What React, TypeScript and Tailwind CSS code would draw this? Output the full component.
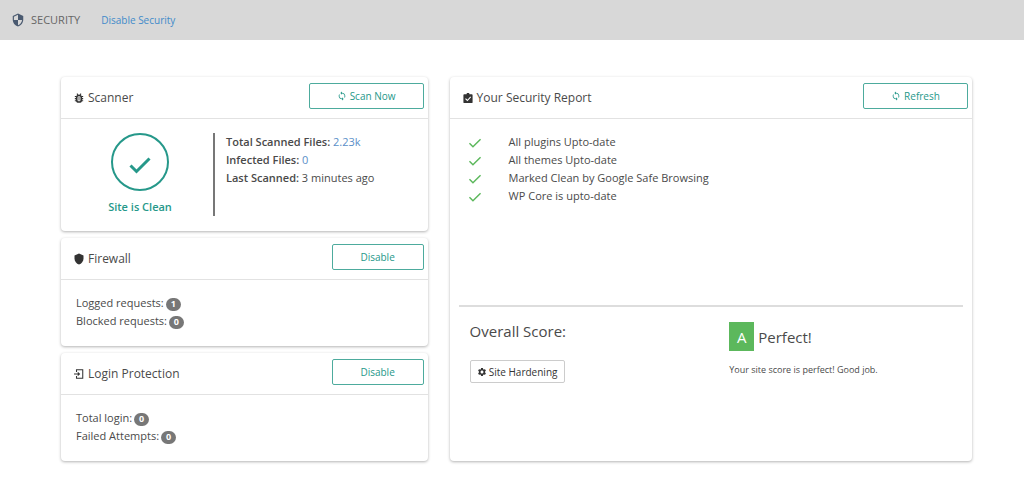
import React from 'react';
import { MdSecurity, MdSettings, MdShield, MdSync } from 'react-icons/md';

const reportItems = [
  'All plugins Upto-date',
  'All themes Upto-date',
  'Marked Clean by Google Safe Browsing',
  'WP Core is upto-date',
];

function CheckIcon({ className, strokeWidth }: { className: string; strokeWidth: number }) {
  return (
    <svg viewBox="0 0 24 24" className={className} fill="none" stroke="currentColor" strokeWidth={strokeWidth} aria-hidden="true">
      <path d="M2.500 12.500l6 6L21.500 5.500" />
    </svg>
  );
}

function BugIcon() {
  return (
    <svg viewBox="0 0 24 24" className="h-2.5 w-2.5" fill="none" stroke="currentColor" aria-hidden="true">
      <rect x="6.500" y="6" width="11" height="15.500" rx="5" strokeWidth="4" />
      <path d="M2 8.500h4M2 13.500h4M2 18.500h4M18 8.500h4M18 13.500h4M18 18.500h4M7 1.500l3 3.500M17 1.500l-3 3.500" strokeWidth="2.500" />
      <path d="M12 9v9" strokeWidth="2" />
    </svg>
  );
}

function ReportIcon() {
  return (
    <svg viewBox="0 0 24 24" className="h-2.5 w-2.5" aria-hidden="true">
      <path d="M3 3h5.500a3.500 3.500 0 0 1 7 0H21a2 2 0 0 1 2 2v17a2 2 0 0 1-2 2H3a2 2 0 0 1-2-2V5a2 2 0 0 1 2-2z" fill="currentColor" />
      <path d="M6 13.500l4.500 4.500L18.500 9.500" fill="none" stroke="#fff" strokeWidth="2.600" />
    </svg>
  );
}

function LoginIcon() {
  return (
    <svg viewBox="0 0 24 24" className="h-2.5 w-2.5" fill="none" stroke="currentColor" strokeWidth="2.500" aria-hidden="true">
      <path d="M6 7V2h15v20H6v-5M0 12h11" />
      <path d="M9 6.500l6 5.500-6 5.500z" fill="currentColor" stroke="none" />
    </svg>
  );
}

interface CardProps {
  title: string;
  icon: React.ReactNode;
  action: React.ReactNode;
  children: React.ReactNode;
}

function Card({ title, icon, action, children }: CardProps) {
  return (
    <section className="flex flex-col rounded-sm bg-white shadow-[0_1px_3px_rgba(0,0,0,0.3)]">
      <header className="flex h-[42px] shrink-0 items-center justify-between border-b border-[#e2e2e2] pr-1 pl-[13px]">
        <h2 className="flex items-center gap-1 text-[12px]">
          <span className="text-[#333]">{icon}</span>
          {title}
        </h2>
        {action}
      </header>
      {children}
    </section>
  );
}

interface ActionButtonProps {
  children: React.ReactNode;
  className: string;
}

function ActionButton({ children, className }: ActionButtonProps) {
  return (
    <button
      type="button"
      className={`mb-1 flex h-[26px] items-center justify-center gap-[3px] rounded-xs border border-[#4dab9d] text-[10px] text-[#26988a] ${className}`}
    >
      {children}
    </button>
  );
}

function Stat({ label, value }: { label: string; value: number }) {
  return (
    <p className="flex items-center gap-0.5">
      {label}
      <span className="mt-0.5 flex h-[13px] w-[15px] items-center justify-center rounded-full bg-[#777] text-[9px] font-bold text-white">
        {value}
      </span>
    </p>
  );
}

export default function App() {
  return (
    <div className="font-['Open_Sans',sans-serif] text-[11px] leading-[18px] text-[#4a4a4a]">
      <header className="flex h-10 items-center bg-[#d8d8d8] pl-[11px]">
        <MdSecurity className="h-3.5 w-3.5 text-[#4a5a70]" />
        <h1 className="ml-1.5 text-[11px] text-[#666]">SECURITY</h1>
        <a href="#" className="ml-[21px] text-[10px] text-[#428bca]">Disable Security</a>
      </header>

      <main className="grid grid-cols-[367fr_523fr] gap-[22px] pt-[37px] pr-[52px] pb-8 pl-[61px]">
        <div className="flex flex-col gap-[7px]">
          <Card
            title="Scanner"
            icon={<BugIcon />}
            action={<ActionButton className="w-[115px]"><MdSync className="h-2.5 w-2.5" />Scan Now</ActionButton>}
          >
            <div className="flex h-28 pt-3.5">
              <div className="flex w-[152px] flex-col items-center pl-1.5">
                <div className="flex h-[58px] w-[58px] items-center justify-center rounded-full border-2 border-[#26988a]">
                  <CheckIcon className="mt-1.5 h-6 w-6 text-[#26988a]" strokeWidth={3} />
                </div>
                <p className="mt-[7px] text-[11px] font-semibold text-[#26988a]">Site is Clean</p>
              </div>
              <div className="h-[83px] border-l-2 border-[#777] pl-[11px]">
                <p><strong className="font-semibold">Total Scanned Files:</strong> <a href="#" className="text-[#5a8fc8]">2.23k</a></p>
                <p><strong className="font-semibold">Infected Files:</strong> <a href="#" className="text-[#5a8fc8]">0</a></p>
                <p><strong className="font-semibold">Last Scanned:</strong> 3 minutes ago</p>
              </div>
            </div>
          </Card>

          <Card
            title="Firewall"
            icon={<MdShield className="-mx-px h-3 w-3" />}
            action={<ActionButton className="w-[92px]">Disable</ActionButton>}
          >
            <div className="h-[66px] px-[15px] pt-3.5">
              <Stat label="Logged requests:" value={1} />
              <Stat label="Blocked requests:" value={0} />
            </div>
          </Card>

          <Card
            title="Login Protection"
            icon={<LoginIcon />}
            action={<ActionButton className="w-[92px]">Disable</ActionButton>}
          >
            <div className="h-[66px] px-[15px] pt-3.5">
              <Stat label="Total login:" value={0} />
              <Stat label="Failed Attempts:" value={0} />
            </div>
          </Card>
        </div>

        <Card
          title="Your Security Report"
          icon={<ReportIcon />}
          action={<ActionButton className="w-[105px]"><MdSync className="h-2.5 w-2.5" />Refresh</ActionButton>}
        >
          <ul className="h-[186px] pt-3.5 pl-[18px]">
            {reportItems.map((item) => (
              <li key={item} className="flex items-center gap-[27px]">
                <CheckIcon className="mt-0.5 h-3.5 w-3.5 text-[#5cb85c]" strokeWidth={2.5} />
                {item}
              </li>
            ))}
          </ul>
          <div className="mx-[9px] grid grid-cols-[260fr_234fr] border-t-2 border-[#ddd] pt-[15px] pl-[11px]">
            <div>
              <h3 className="text-[15px]">Overall Score:</h3>
              <button
                type="button"
                className="mt-5 flex h-[23px] w-[95px] items-center justify-center gap-0.5 rounded-xs border border-[#ccc] text-[10px] text-[#333]"
              >
                <MdSettings className="h-2.5 w-2.5" />
                Site Hardening
              </button>
            </div>
            <div>
              <p className="flex items-center gap-1 text-[15px]">
                <span className="flex h-[29px] w-[25px] items-center justify-center bg-[#5cb85c] text-white">A</span>
                Perfect!
              </p>
              <p className="mt-2.5 text-[9px]">Your site score is perfect! Good job.</p>
            </div>
          </div>
        </Card>
      </main>
    </div>
  );
}
